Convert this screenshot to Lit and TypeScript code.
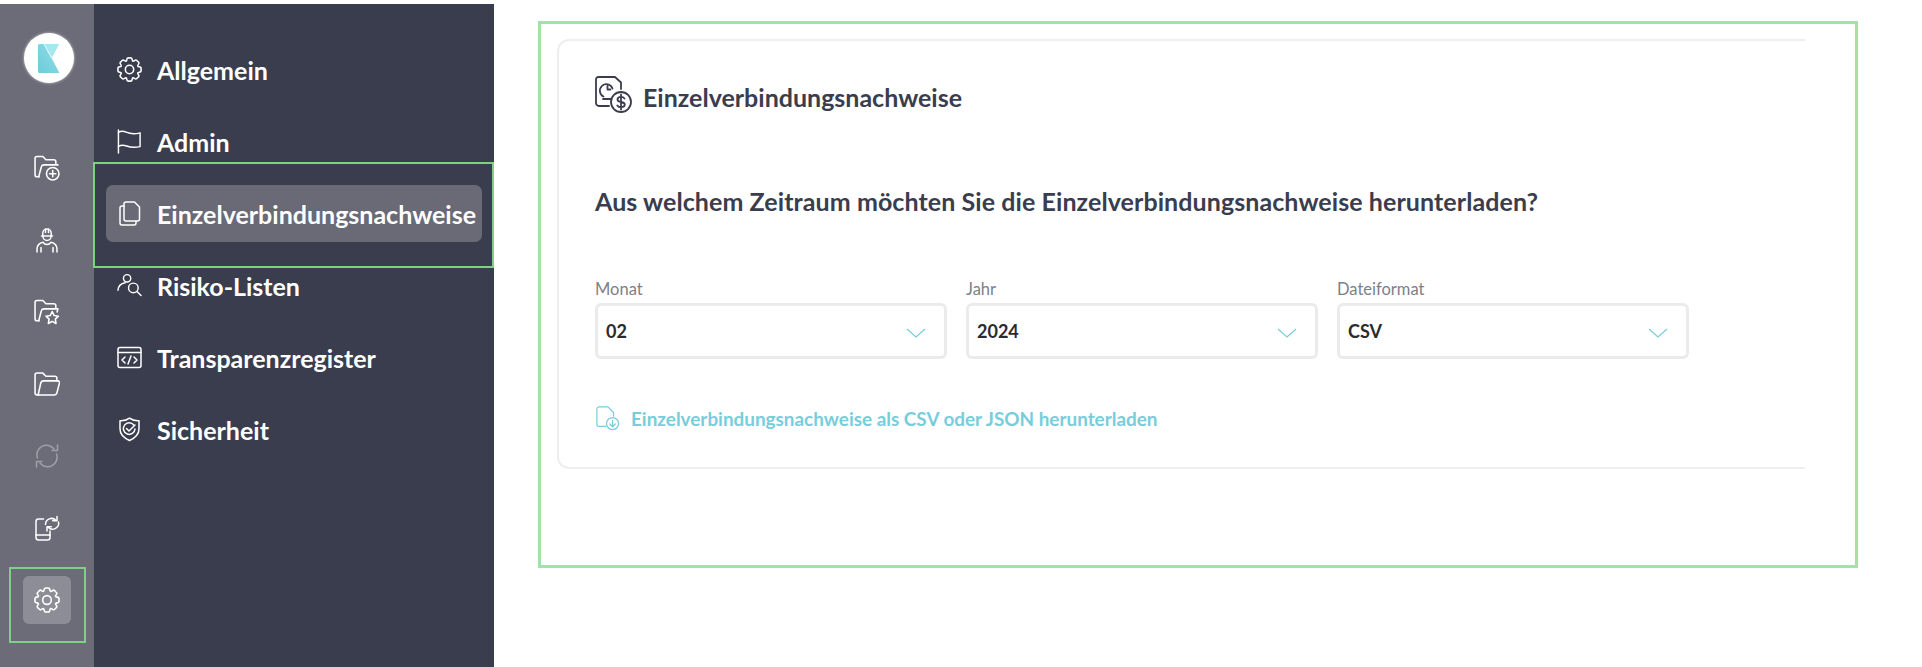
import { LitElement, html, css, svg } from "lit";
import { customElement } from "lit/decorators.js";

function gearPath(cx: number, cy: number, ro: number, ri: number, n = 8) {
  const pts: string[] = [];
  const step = (Math.PI * 2) / n;
  const p = (r: number, a: number) => `${(cx + r * Math.cos(a)).toFixed(2)} ${(cy + r * Math.sin(a)).toFixed(2)}`;
  pts.push(`M${p(ri, -step * 0.5 - Math.PI / 2)}`);
  for (let i = 0; i < n; i++) {
    const a = i * step - Math.PI / 2;
    pts.push(`C${p(ri * 1.02, a - step * 0.3)} ${p(ro * 1.12, a - step * 0.36)} ${p(ro, a)}`);
    pts.push(`C${p(ro * 1.12, a + step * 0.36)} ${p(ri * 1.02, a + step * 0.3)} ${p(ri, a + step * 0.5)}`);
  }
  return pts.join(" ") + "Z";
}
const gear = svg`<path d=${gearPath(12, 12, 11, 8.6)}/><circle cx="12" cy="12" r="4"/>`;
const folderBack = svg`<path d="M5 20.5H3a2 2 0 0 1-2-2V3a2 2 0 0 1 2-2h5.5l3 3H19a2 2 0 0 1 2 2v2"/>`;
const folderPlus = svg`${folderBack}<path d="M4.500 20.500 7 11a2.500 2.500 0 0 1 2.400-2H23"/><circle cx="18" cy="17.500" r="6"/><path d="M18 14.500v6M15 17.500h6"/>`;
const folderStar = svg`${folderBack}<path d="M4.500 20.500 7 11a2.500 2.500 0 0 1 2.400-2H23l-.8 3"/><path d="m17.500 11.500 1.900 3.900 4.100.6-3 2.900.7 4.100-3.700-2-3.700 2 .7-4.100-3-2.900 4.100-.6z"/>`;
const folderOpen = svg`<path d="M4.500 22H3a2 2 0 0 1-2-2V3a2 2 0 0 1 2-2h5.500l3 3H20a2 2 0 0 1 2 2v2.500"/><path d="M4 22 6.500 10.500a2.500 2.500 0 0 1 2.400-2H23a1.500 1.500 0 0 1 1.500 1.900L22 20.200a2.400 2.400 0 0 1-2.300 1.800z"/>`;
const worker = svg`<path d="M7.500 9h11"/><path d="M8.800 9V6.200a4.200 4.200 0 0 1 8.400 0V9"/><path d="M11.500 2.200v3.300M14.500 2.200v3.300"/><path d="M9 9.500a4 4 0 0 0 8 0"/><path d="M3 25v-3c0-3.500 2.500-6 6-6.800 1 1.400 2.400 2.200 4 2.200s3-.8 4-2.200c3.500.8 6 3.300 6 6.800v3"/><path d="M7 25v-4.500M19 25v-4.500"/>`;
const sync = svg`<path d="M3.500 14A9.500 9.500 0 0 1 20 5"/><path d="M22.500 10A9.500 9.500 0 0 1 6 19"/><path d="M23.500 1v5.500H18M2.500 23v-5.500H8"/>`;
const phoneSync = svg`<path d="M9 4H4a2.500 2.500 0 0 0-2.500 2.500v16A2.500 2.500 0 0 0 4 25h9a2.500 2.500 0 0 0 2.500-2.500V16"/><path d="M1.500 20h14"/><path d="M11 9.500a6 6 0 0 1 10.500-4"/><path d="M24 7a6 6 0 0 1-10.500 5"/><path d="M22.500 1.500v4.300h-4.300M12.500 16v-4.200h4.300"/>`;
const flag = svg`<path d="M1 25V1"/><path d="M1 3.500c2.500-1.500 5-1.500 8-.2s8 2.400 14.500.7v14.300c-6 1.400-10.500.7-14-.6-3-1-6-1-8.500.3"/>`;
const copy = svg`<path d="M8 1h8.500L21.500 6v12a2 2 0 0 1-2 2H8a2 2 0 0 1-2-2V3a2 2 0 0 1 2-2z"/><path d="M6 5H4a2 2 0 0 0-2 2v15a2 2 0 0 0 2 2h12a2 2 0 0 0 2-2v-2"/>`;
const userSearch = svg`<circle cx="10.500" cy="4.500" r="3.800"/><path d="M1 17c.4-4.300 3.500-7.200 7.500-7.800"/><circle cx="17" cy="14.500" r="5"/><path d="m21 18.500 4 4"/>`;
const codeWin = svg`<rect x="1" y="1" width="23" height="20" rx="2"/><path d="M1 6h23"/><path d="M8 10.500 5 13.500l3 3M17 10.500l3 3-3 3M14 9.500l-3 8"/>`;
const shield = svg`<path d="M11.500 1.200c2.500 2 6 2.800 9.500 2.600v8c0 5.500-3.800 9.200-9.500 11.700C5.800 21 2 17.300 2 11.800v-8c3.500.2 7-.6 9.500-2.600z"/><path d="M15.800 8A5.800 5.800 0 1 0 17 12"/><path d="m8.500 11.500 2.500 2.500 6-6"/>`;
const invoice = svg`<path d="M14 30H4a3 3 0 0 1-3-3V3.500A2.500 2.500 0 0 1 3.500 1H20l6 5.500V13"/><path d="M8.500 20.500a6.500 6.500 0 1 1 9-8"/><path d="M12.500 10v3.500h3"/><path d="M16 23H8"/><circle cx="26" cy="26" r="10"/><path d="M29.500 22.500c-.8-1.100-2-1.700-3.500-1.700-2.200 0-3.500 1.100-3.500 2.600 0 3.700 7.300 1.500 7.300 5.200 0 1.600-1.500 2.600-3.800 2.600-1.600 0-2.900-.6-3.700-1.800M26 18.500v15"/>`;
const dl = svg`<path d="M11 22H3.500A2.500 2.500 0 0 1 1 19.500V3.500A2.500 2.500 0 0 1 3.500 1H13l6 6v4"/><circle cx="18" cy="19" r="6.500"/><path d="M18 15.500v7M15 19.500l3 3 3-3"/>`;

const railItems = [
  { i: folderPlus, vb: "0 0 25 24", cls: "" },
  { i: worker, vb: "0 0 26 26", cls: "" },
  { i: folderStar, vb: "0 0 25 24", cls: "" },
  { i: folderOpen, vb: "0 0 25 23", cls: "" },
  { i: sync, vb: "0 0 26 24", cls: "faded" },
  { i: phoneSync, vb: "0 0 25 26", cls: "" },
  { i: gear, vb: "0 0 24 24", cls: "on" },
];
const navItems = [
  { i: gear, vb: "0 0 24 24", t: "Allgemein", cls: "" },
  { i: flag, vb: "0 0 25 26", t: "Admin", cls: "" },
  { i: copy, vb: "0 0 23 25", t: "Einzelverbindungsnachweise", cls: "active" },
  { i: userSearch, vb: "0 0 26 24", t: "Risiko-Listen", cls: "" },
  { i: codeWin, vb: "0 0 25 22", t: "Transparenzregister", cls: "" },
  { i: shield, vb: "0 0 23 25", t: "Sicherheit", cls: "" },
];
const selects = [
  { l: "Monat", v: "02" },
  { l: "Jahr", v: "2024" },
  { l: "Dateiformat", v: "CSV" },
];

@customElement("app-root")
export class AppRoot extends LitElement {
  static styles = css`
    :host { display: block; height: 667px; box-sizing: border-box; padding-top: 4px; background: #fff; overflow: hidden;
      font-family: "Lato", "Noto Sans", sans-serif; }
    .page { display: flex; height: 663px; }
    .rail { width: 94px; flex: none; background: #6b6c78; display: flex; flex-direction: column; align-items: center; padding-top: 29px; box-sizing: border-box; }
    .logo { width: 50px; height: 50px; border-radius: 50%; background: #fff; display: flex; align-items: center; justify-content: center; margin-bottom: 61px; margin-left: 3px; box-shadow: 0 0 3px rgba(255,255,255,.7); }
    .logo svg { width: 22px; height: 29px; display: block; }
    .rail-btn { width: 48px; height: 48px; margin-bottom: 24px; border-radius: 6px; display: flex; align-items: center; justify-content: center; position: relative; }
    .rail-btn svg, .ico svg { fill: none; stroke: #fff; stroke-width: 1.5; stroke-linecap: round; stroke-linejoin: round; display: block; }
    .rail-btn svg { width: 26px; height: 26px; }
    .rail-btn.faded svg { opacity: .35; }
    .rail-btn.on { background: #8c8d97; }
    .rail-btn.on::after { content: ""; position: absolute; left: -14px; top: -9px; width: 73px; height: 72px; border: 2px solid #7fcf85; }
    .side { width: 400px; flex: none; background: #3a3d4d; box-sizing: border-box; padding: 37px 12px 0 12px; display: flex; flex-direction: column; gap: 15px; }
    .nav { height: 57px; border-radius: 7px; display: flex; align-items: center; padding-left: 11px; gap: 15px; color: #fff; font-size: 25px; font-weight: 700; position: relative; white-space: nowrap; }
    .nav .ico svg { width: 25px; height: 25px; }
    .nav.active { background: #696a76; }
    .nav.active::after { content: ""; position: absolute; left: -13px; right: -12px; top: -23px; bottom: -26px; border: 2px solid #7fcf85; }
    .main { flex: 1; min-width: 0; padding: 17px 64px 0 44px; }
    .frame { height: 547px; border: 3px solid #a5e0a8; box-sizing: border-box; padding: 15px 50px 0 16px; }
    .card { height: 430px; border: 2px solid #eee; border-right: none; border-radius: 12px 0 0 12px; box-sizing: border-box; padding: 35px 0 0 36px; color: #3a3d4d; }
    .head { display: flex; align-items: center; gap: 11px; font-size: 25px; font-weight: 700; height: 37px; }
    .head span { padding-top: 5px; }
    .head svg { width: 37px; height: 37px; fill: none; stroke: #3a3d4d; stroke-width: 1.8; stroke-linecap: round; stroke-linejoin: round; display: block; }
    .q { margin: 72px 0 0; font-size: 25px; font-weight: 700; line-height: 33px; letter-spacing: .08px; }
    .fields { display: flex; gap: 19px; margin-top: 60px; }
    .field { width: 352px; }
    .field label { display: block; font-size: 16.500px; line-height: 22px; color: #7d7f8a; margin-bottom: 3px; }
    .sel { height: 56px; border: 3px solid #ebebeb; border-radius: 6px; box-sizing: border-box; display: flex; align-items: center; justify-content: space-between; padding: 0 18px 0 8px; font-size: 18px; font-weight: 700; color: #2b2b2b; }
    .sel svg { width: 20px; height: 10px; fill: none; stroke: #78cddb; stroke-width: 1.2; margin-top: 4px; }
    .link { display: flex; align-items: center; gap: 11px; margin-top: 47px; font-size: 18.900px; font-weight: 700; color: #78cddb; }
    .link svg { width: 25px; height: 24px; fill: none; stroke: #78cddb; stroke-width: 1.3; stroke-linecap: round; stroke-linejoin: round; display: block; }
  `;
  render() {
    return html`<div class="page">
      <div class="rail">
        <div class="logo"><svg viewBox="0 0 22 29"><defs><linearGradient id="kg" x1="0" y1="1" x2="1" y2="0"><stop offset="0" stop-color="#6fcbd9"/><stop offset="1" stop-color="#8fdde9"/></linearGradient></defs><path d="M1.500 0h19.500L13.500 14 21.500 29H1.500A1.500 1.500 0 0 1 0 27.500V1.500A1.500 1.500 0 0 1 1.500 0z" fill="url(#kg)"/><path d="M6 0h15L13.500 14z" fill="#a6e8f1"/><path d="M6 0l7.500 14" stroke="#fff" stroke-width=".8" fill="none"/></svg></div>
        ${railItems.map((r) => html`<div class="rail-btn ${r.cls}"><svg viewBox=${r.vb}>${r.i}</svg></div>`)}
      </div>
      <div class="side">
        ${navItems.map((n) => html`<div class="nav ${n.cls}"><span class="ico"><svg viewBox=${n.vb}>${n.i}</svg></span><span>${n.t}</span></div>`)}
      </div>
      <div class="main"><div class="frame"><div class="card">
        <div class="head"><svg viewBox="0 0 37 37">${invoice}</svg><span>Einzelverbindungsnachweise</span></div>
        <p class="q">Aus welchem Zeitraum möchten Sie die Einzelverbindungsnachweise herunterladen?</p>
        <div class="fields">
          ${selects.map((s) => html`<div class="field"><label>${s.l}</label><div class="sel"><span>${s.v}</span><svg viewBox="0 0 20 10"><path d="M1 1l9 8 9-8"/></svg></div></div>`)}
        </div>
        <div class="link"><svg viewBox="0 0 25 26">${dl}</svg><span>Einzelverbindungsnachweise als CSV oder JSON herunterladen</span></div>
      </div></div></div>
    </div>`;
  }
}
